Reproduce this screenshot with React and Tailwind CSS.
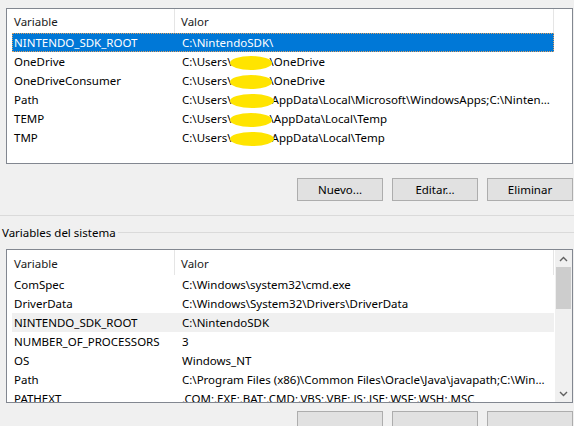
const font = { fontFamily: '"Noto Sans", "Open Sans", sans-serif' }

const userVars = [
  { name: 'NINTENDO_SDK_ROOT', value: ['C:\\NintendoSDK\\'], selected: true },
  { name: 'OneDrive', value: ['C:\\Users\\', 38, '\\OneDrive'] },
  { name: 'OneDriveConsumer', value: ['C:\\Users\\', 38, '\\OneDrive'] },
  { name: 'Path', value: ['C:\\Users\\', 40, 'AppData\\Local\\Microsoft\\WindowsApps;C:\\Ninten...'] },
  { name: 'TEMP', value: ['C:\\Users\\', 38, '\\AppData\\Local\\Temp'] },
  { name: 'TMP', value: ['C:\\Users\\', 40, 'AppData\\Local\\Temp'] },
]

const systemVars = [
  { name: 'ComSpec', value: 'C:\\Windows\\system32\\cmd.exe' },
  { name: 'DriverData', value: 'C:\\Windows\\System32\\Drivers\\DriverData' },
  { name: 'NINTENDO_SDK_ROOT', value: 'C:\\NintendoSDK', hover: true },
  { name: 'NUMBER_OF_PROCESSORS', value: '3' },
  { name: 'OS', value: 'Windows_NT' },
  { name: 'Path', value: 'C:\\Program Files (x86)\\Common Files\\Oracle\\Java\\javapath;C:\\Win...' },
  { name: 'PATHEXT', value: '.COM;.EXE;.BAT;.CMD;.VBS;.VBE;.JS;.JSE;.WSF;.WSH;.MSC' },
]

// yellow marker scribbled over the user name
function Blot({ width }) {
  return (
    <span className="relative inline-block h-[12px]" style={{ width }}>
      <span className="absolute left-[-2px] top-[0px] h-[14px] w-[calc(100%+4px)] rounded-[50%] bg-[#ffe400]" />
    </span>
  )
}

function Header({ h }) {
  return (
    <div className={`flex w-[547px] ${h} text-[11.5px] text-[#1a1a1a]`}>
      <div className="flex w-[168px] items-center border-r border-[#e5e5e5] pl-[7px] pt-[2px]">Variable</div>
      <div className="flex flex-1 items-center border-r border-[#e5e5e5] pl-[6px] pt-[2px]">Valor</div>
    </div>
  )
}

function Row({ name, children, selected, hover }) {
  let tone = 'text-black'
  if (selected) tone = 'bg-[#0078d7] text-white outline-1 outline-dotted outline-offset-[-1px] outline-[#e0a060]'
  if (hover) tone = 'bg-[#f0f0f0] text-black'
  return (
    <div className="flex h-[19px] pl-[5px]">
      <div className={`flex w-[542px] items-center whitespace-nowrap text-[11.5px] ${tone}`}>
        <div className="w-[163px] pl-[2px]">{name}</div>
        <div className="flex flex-1 items-center overflow-hidden pl-[7px]">{children}</div>
      </div>
    </div>
  )
}

function Chevron({ down }) {
  return (
    <svg width="9" height="6" viewBox="0 0 9 6" className={down ? 'rotate-180' : ''}>
      <path d="M1 5 L4.5 1.5 L8 5" fill="none" stroke="#606060" strokeWidth="1.4" />
    </svg>
  )
}

function Btn({ children }) {
  return (
    <div className="flex h-[23px] w-[86px] items-center justify-center border border-[#adadad] bg-[#e1e1e1] text-[11.5px] text-black">
      {children}
    </div>
  )
}

export default function App() {
  return (
    <div className="h-[426px] w-[574px] overflow-hidden bg-[#f0f0f0]" style={font}>
      {/* variables de usuario */}
      <div className="ml-[6px] mt-[8px] h-[156px] w-[567px] border border-[#828790] bg-white">
        <Header h="h-[24px]" />
        {userVars.map(v => (
          <Row key={v.name} name={v.name} selected={v.selected}>
            {v.value.map((part, i) =>
              typeof part === 'number' ? <Blot key={i} width={part} /> : <span key={i}>{part}</span>
            )}
          </Row>
        ))}
      </div>

      <div className="mt-[14px] flex justify-end gap-[9px] pr-[1px]">
        <Btn>Nuevo...</Btn>
        <Btn>Editar...</Btn>
        <Btn>Eliminar</Btn>
      </div>

      <div className="mt-[14px] h-[2px] border-t border-[#dadada] border-b-white" />

      <div className="mt-[8px] flex h-[16px] items-center text-[11.5px] text-black">
        <span className="pl-[2px] pr-[2px]">Variables del sistema</span>
        <div className="h-[2px] flex-1 border-t border-[#dadada]" />
      </div>

      {/* variables del sistema */}
      <div className="ml-[6px] mt-[8px] flex h-[154px] w-[567px] border border-[#828790] bg-white">
        <div className="w-[548px] overflow-hidden">
          <Header h="h-[25px]" />
          {systemVars.map(v => (
            <Row key={v.name} name={v.name} hover={v.hover}>
              <span>{v.value}</span>
            </Row>
          ))}
        </div>
        <div className="flex w-[17px] flex-col bg-[#f0f0f0]">
          <div className="flex h-[17px] items-center justify-center"><Chevron /></div>
          <div className="mx-[1px] h-[42px] bg-[#cdcdcd]" />
          <div className="flex-1" />
          <div className="flex h-[17px] items-center justify-center"><Chevron down /></div>
        </div>
      </div>

      {/* fila inferior de botones, recortada por el borde */}
      <div className="mt-[8px] flex justify-end gap-[9px] pr-[1px]">
        <div className="h-[23px] w-[86px] border border-[#adadad] bg-[#e1e1e1]" />
        <div className="h-[23px] w-[86px] border border-[#adadad] bg-[#e1e1e1]" />
        <div className="h-[23px] w-[86px] border border-[#adadad] bg-[#e1e1e1]" />
      </div>
    </div>
  )
}
